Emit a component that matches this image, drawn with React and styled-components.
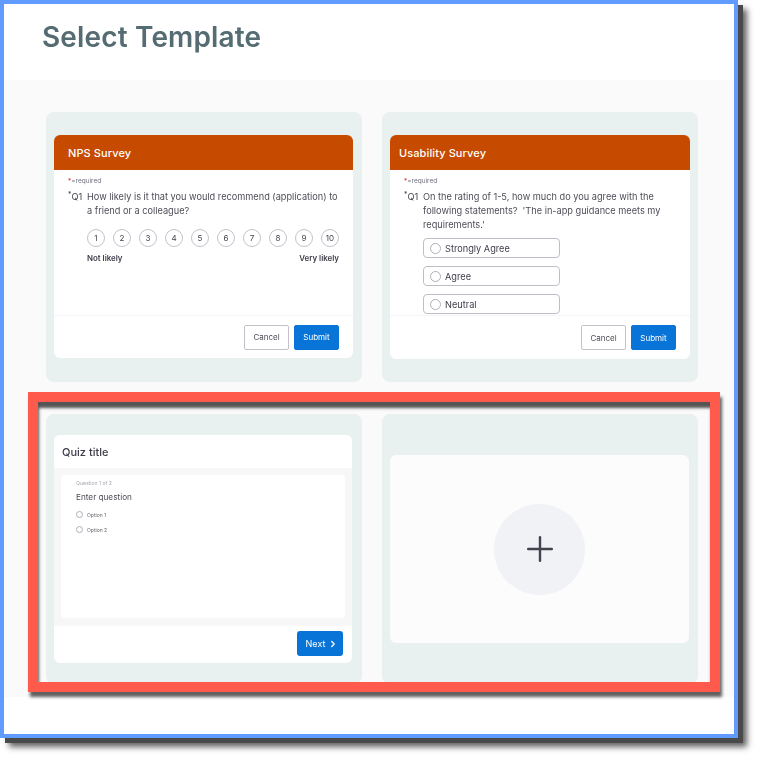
import React from "react"
import styled, { createGlobalStyle } from "styled-components"
import { ChevronRight } from "lucide-react"

const GlobalStyle = createGlobalStyle`
  html, body {
    margin: 0;
    background: #ffffff;
    font-family: "Inter", "Liberation Sans", sans-serif;
  }
`

const Page = styled.div`
  width: 758px;
  height: 758px;
  overflow: hidden;
  background: #ffffff;
`

const Frame = styled.div`
  position: relative;
  box-sizing: border-box;
  width: 738px;
  height: 738px;
  display: flex;
  flex-direction: column;
  border: 4px solid #619bff;
  background: #ffffff;
  box-shadow: 5px 5px 0 #4a4a4a, 9px 9px 6px rgba(60, 60, 60, 0.8);
  filter: blur(0.35px);
`

const TopBar = styled.header`
  height: 76px;
  flex: none;
  display: flex;
  align-items: center;
  padding-left: 38px;
  padding-bottom: 11px;
  box-sizing: border-box;
`

const PageTitle = styled.h1`
  margin: 0;
  font-size: 28px;
  line-height: 36px;
  font-weight: 600;
  letter-spacing: 0.15px;
  color: #546c72;
`

const Body = styled.main`
  height: 617px;
  flex: none;
  box-sizing: border-box;
  padding: 32px 36px 0 42px;
  background: #fafafa;
  display: grid;
  grid-template-columns: 316px 316px;
  grid-auto-rows: 270px;
  column-gap: 20px;
  row-gap: 32px;
`

const Card = styled.section`
  box-sizing: border-box;
  border-radius: 8px;
  background: #e9f0f0;
  padding: ${(p) => p.$top}px 8px 0;
`

const Panel = styled.div`
  box-sizing: border-box;
  width: ${(p) => p.$width}px;
  height: ${(p) => p.$height}px;
  display: flex;
  flex-direction: column;
  background: #ffffff;
  border-radius: 6px;
  overflow: hidden;
`

const SurveyHeader = styled.div`
  flex: none;
  height: 35px;
  display: flex;
  align-items: center;
  padding-left: ${(p) => p.$inset}px;
  background: #c64a00;
  color: #ffffff;
  font-size: 11px;
  font-weight: 500;
  letter-spacing: 0.1px;
`

const SurveyBody = styled.div`
  flex: 1;
  min-height: 0;
  overflow: hidden;
  padding: 7px 14px 0;
`

const Required = styled.div`
  font-size: 6.5px;
  line-height: 9px;
  color: #6f6f7c;

  span {
    color: #d92c20;
  }
`

const Question = styled.div`
  display: flex;
  margin-top: 4px;
  font-size: 9.2px;
  line-height: 13.8px;
  color: #4d4d58;
`

const QuestionNumber = styled.div`
  flex: none;
  width: 19px;
  color: #44444f;

  sup {
    font-size: 7px;
    line-height: 0;
    vertical-align: 3px;
  }
`

const Indented = styled.div`
  margin-left: 19px;
`

const Scale = styled.div`
  display: flex;
  justify-content: space-between;
  margin-top: 11px;
`

const ScaleItem = styled.div`
  box-sizing: border-box;
  width: 18px;
  height: 18px;
  display: flex;
  align-items: center;
  justify-content: center;
  border: 1px solid #c2c2ca;
  border-radius: 50%;
  font-size: 8px;
  color: #44444f;
`

const ScaleLabels = styled.div`
  display: flex;
  justify-content: space-between;
  margin-top: 6px;
  font-size: 7.9px;
  line-height: 11px;
  font-weight: 600;
  color: #3d3d4a;
`

const Options = styled.div`
  display: flex;
  flex-direction: column;
  gap: 8px;
  margin-top: 7px;
`

const Option = styled.div`
  box-sizing: border-box;
  width: 137px;
  height: 20px;
  flex: none;
  display: flex;
  align-items: center;
  gap: 4px;
  padding-left: 6px;
  border: 1px solid #bebec8;
  border-radius: 4px;
  font-size: 9.2px;
  color: #3d3d4a;
`

const Radio = styled.span`
  box-sizing: border-box;
  flex: none;
  display: block;
  width: ${(p) => p.$size}px;
  height: ${(p) => p.$size}px;
  border: 1px solid #aeaeb8;
  border-radius: 50%;
`

const Footer = styled.div`
  flex: none;
  height: ${(p) => p.$height}px;
  display: flex;
  justify-content: flex-end;
  align-items: center;
  gap: 5px;
  padding-right: 14px;
  box-sizing: border-box;
  border-top: 1px solid #f4f4f6;
`

const Button = styled.button`
  box-sizing: border-box;
  width: 45px;
  height: 25px;
  padding: 0;
  border-radius: 2px;
  font-family: inherit;
  font-size: 8px;
  border: 1px solid ${(p) => (p.$primary ? "#0974d8" : "#c2c2ca")};
  background: ${(p) => (p.$primary ? "#0974d8" : "#ffffff")};
  color: ${(p) => (p.$primary ? "#ffffff" : "#4d4d58")};
`

const QuizHeader = styled.div`
  flex: none;
  height: 33px;
  display: flex;
  align-items: center;
  padding-left: 8px;
  box-sizing: border-box;
  background: #ffffff;
  font-size: 11px;
  font-weight: 500;
  color: #3d3d4a;
`

const QuizArea = styled.div`
  flex: none;
  height: 158px;
  box-sizing: border-box;
  padding: 7px 7px 8px;
  background: #f7f7f8;
`

const QuizSheet = styled.div`
  height: 100%;
  box-sizing: border-box;
  padding: 5px 15px;
  background: #ffffff;
  border-radius: 4px;
`

const QuizCounter = styled.div`
  font-size: 5.1px;
  line-height: 7px;
  color: #a8a8b0;
`

const QuizQuestion = styled.div`
  margin-top: 5px;
  font-size: 8.2px;
  line-height: 11px;
  color: #4d4d58;
`

const QuizOption = styled.div`
  display: flex;
  align-items: center;
  gap: 4px;
  height: 7px;
  margin-top: 8px;
  font-size: 5px;
  color: #66666f;
`

const QuizFooter = styled.div`
  flex: 1;
  display: flex;
  justify-content: flex-end;
  padding: 5px 9px 0 0;
  box-sizing: border-box;
`

const NextButton = styled.button`
  box-sizing: border-box;
  width: 46px;
  height: 25px;
  padding: 0 0 0 4px;
  display: flex;
  align-items: center;
  justify-content: center;
  gap: 3px;
  border: none;
  border-radius: 3px;
  background: #0974d8;
  color: #ffffff;
  font-family: inherit;
  font-size: 9px;
`

const AddPanel = styled.div`
  width: 299px;
  height: 188px;
  display: flex;
  align-items: center;
  justify-content: center;
  background: #fcfcfc;
  border-radius: 6px;
`

const AddCircle = styled.div`
  width: 91px;
  height: 91px;
  display: flex;
  align-items: center;
  justify-content: center;
  border-radius: 50%;
  background: #f1f2f6;
`

const Highlight = styled.div`
  position: absolute;
  left: 24px;
  top: 388px;
  width: 692px;
  height: 300px;
  box-sizing: border-box;
  border: 10px solid #ff5a4c;
  box-shadow: 2px 5px 3px rgba(30, 30, 30, 0.7), inset 1px 6px 3px rgba(30, 30, 30, 0.75);
  pointer-events: none;
`

const ScaleValues = [1, 2, 3, 4, 5, 6, 7, 8, 9, 10]

const App = () => {
  return (
    <Page>
      <GlobalStyle />
      <Frame>
        <TopBar>
          <PageTitle>Select Template</PageTitle>
        </TopBar>
        <Body>
          <Card $top={23}>
            <Panel $width={299} $height={223}>
              <SurveyHeader $inset={14}>NPS Survey</SurveyHeader>
              <SurveyBody>
                <Required>
                  <span>*</span>=required
                </Required>
                <Question>
                  <QuestionNumber>
                    <sup>*</sup>Q1
                  </QuestionNumber>
                  <div>
                    How likely is it that you would recommend (application) to a friend or a colleague?
                  </div>
                </Question>
                <Indented>
                  <Scale>
                    {ScaleValues.map((value) => (
                      <ScaleItem key={value}>{value}</ScaleItem>
                    ))}
                  </Scale>
                  <ScaleLabels>
                    <span>Not likely</span>
                    <span>Very likely</span>
                  </ScaleLabels>
                </Indented>
              </SurveyBody>
              <Footer $height={43}>
                <Button>Cancel</Button>
                <Button $primary>Submit</Button>
              </Footer>
            </Panel>
          </Card>
          <Card $top={23}>
            <Panel $width={300} $height={224}>
              <SurveyHeader $inset={9}>Usability Survey</SurveyHeader>
              <SurveyBody>
                <Required>
                  <span>*</span>=required
                </Required>
                <Question>
                  <QuestionNumber>
                    <sup>*</sup>Q1
                  </QuestionNumber>
                  <div>
                    On the rating of 1-5, how much do you agree with the following statements?&nbsp; 'The in-app guidance meets my requirements.'
                  </div>
                </Question>
                <Indented>
                  <Options>
                    {["Strongly Agree", "Agree", "Neutral"].map((label) => (
                      <Option key={label}>
                        <Radio $size={11} />
                        {label}
                      </Option>
                    ))}
                  </Options>
                </Indented>
              </SurveyBody>
              <Footer $height={44}>
                <Button>Cancel</Button>
                <Button $primary>Submit</Button>
              </Footer>
            </Panel>
          </Card>
          <Card $top={21}>
            <Panel $width={298} $height={228}>
              <QuizHeader>Quiz title</QuizHeader>
              <QuizArea>
                <QuizSheet>
                  <QuizCounter>Question 1 of 2</QuizCounter>
                  <QuizQuestion>Enter question</QuizQuestion>
                  <QuizOption>
                    <Radio $size={7} />
                    Option 1
                  </QuizOption>
                  <QuizOption>
                    <Radio $size={7} />
                    Option 2
                  </QuizOption>
                </QuizSheet>
              </QuizArea>
              <QuizFooter>
                <NextButton>
                  Next
                  <ChevronRight size={10} strokeWidth={3} />
                </NextButton>
              </QuizFooter>
            </Panel>
          </Card>
          <Card $top={41}>
            <AddPanel>
              <AddCircle>
                <svg width="26" height="26" viewBox="0 0 26 26" fill="none" stroke="#44444f" strokeWidth="2.4" strokeLinecap="round">
                  <line x1="13" y1="1.2" x2="13" y2="24.8" />
                  <line x1="1.2" y1="13" x2="24.8" y2="13" />
                </svg>
              </AddCircle>
            </AddPanel>
          </Card>
        </Body>
        <Highlight />
      </Frame>
    </Page>
  )
}

export default App
